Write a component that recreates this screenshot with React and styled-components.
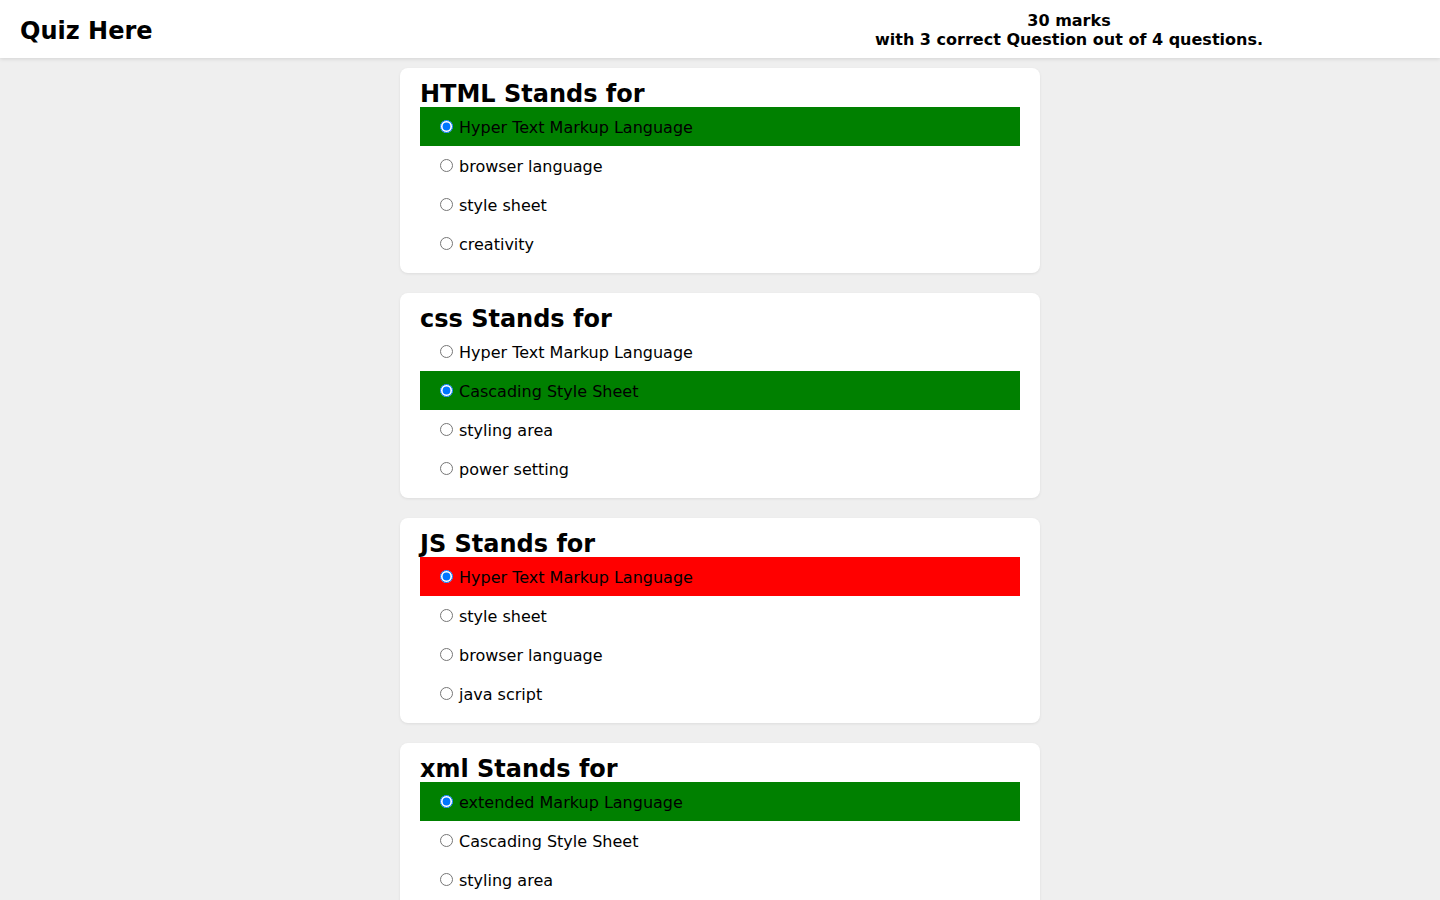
import React from "react";
import styled, { createGlobalStyle } from "styled-components";

const GlobalStyle = createGlobalStyle`
  body {
    margin: 0;
    background-color: #efefef;
    font-family: Verdana, "DejaVu Sans", sans-serif;
  }
`;

const Header = styled.header`
  display: flex;
  align-items: center;
  justify-content: space-between;
  height: 58px;
  padding: 0 20px;
  background-color: #fff;
  box-shadow: 0 1px 4px rgba(0, 0, 0, 0.12);

  h1 {
    margin: 0;
    padding-top: 3px;
    font-size: 24px;
  }
`;

const Score = styled.div`
  margin-right: 157px;
  text-align: center;
  font-size: 16px;
  font-weight: bold;
  line-height: 19px;
  padding-top: 2px;
`;

const Main = styled.main`
  display: flex;
  flex-direction: column;
  align-items: center;
  gap: 20px;
  padding-top: 10px;
`;

const Card = styled.section`
  width: 600px;
  padding: 10px 20px;
  background-color: #fff;
  border-radius: 8px;
  box-shadow: 0 1px 3px rgba(0, 0, 0, 0.08);

  h2 {
    margin: 0;
    padding-top: 3px;
    font-size: 24px;
    line-height: 26px;
  }
`;

const Option = styled.label`
  box-sizing: border-box;
  display: flex;
  align-items: center;
  height: 39px;
  padding: 1px 0 0 15px;
  font-size: 16px;
  background-color: ${(p) => p.$status === "right" ? "#008000" : p.$status === "wrong" ? "#ff0000" : "transparent"};

  input {
    margin: -1px 6px 0 5px;
    width: 13px;
    height: 13px;
  }
`;

const questions = [
  {
    title: "HTML Stands for",
    options: ["Hyper Text Markup Language", "browser language", "style sheet", "creativity"],
    picked: 0,
    correct: 0,
  },
  {
    title: "css Stands for",
    options: ["Hyper Text Markup Language", "Cascading Style Sheet", "styling area", "power setting"],
    picked: 1,
    correct: 1,
  },
  {
    title: "JS Stands for",
    options: ["Hyper Text Markup Language", "style sheet", "browser language", "java script"],
    picked: 0,
    correct: 3,
  },
  {
    title: "xml Stands for",
    options: ["extended Markup Language", "Cascading Style Sheet", "styling area", "power setting"],
    picked: 0,
    correct: 0,
  },
];

export default function App() {
  return (
    <>
      <GlobalStyle />
      <Header>
        <h1>Quiz Here</h1>
        <Score>
          30 marks
          <br />
          with 3 correct Question out of 4 questions.
        </Score>
      </Header>
      <Main>
        {questions.map((q, qi) => (
          <Card key={qi}>
            <h2>{q.title}</h2>
            {q.options.map((opt, oi) => {
              let status = "";
              if (oi === q.picked) status = oi === q.correct ? "right" : "wrong";
              return (
                <Option key={oi} $status={status}>
                  <input
                    type="radio"
                    name={"q" + qi}
                    checked={oi === q.picked}
                    onChange={() => {}}
                  />
                  {opt}
                </Option>
              );
            })}
          </Card>
        ))}
      </Main>
    </>
  );
}
